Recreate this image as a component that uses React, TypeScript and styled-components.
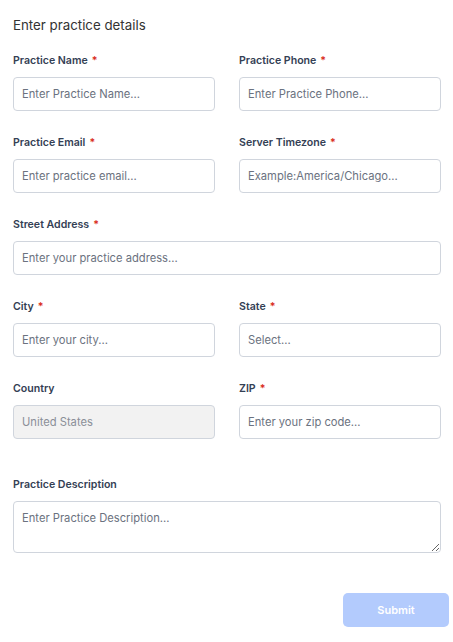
import React from "react";
import styled, { createGlobalStyle } from "styled-components";

const GlobalStyle = createGlobalStyle`
  html, body { margin: 0; padding: 0; background: #ffffff; }
  body { font-family: Inter, "Noto Sans", Arial, sans-serif; }
  * { box-sizing: border-box; }
`;

const Page = styled.div`
  padding: 17px 12px 0 13px;
  width: 453px;
`;

const Title = styled.h2`
  margin: 0 0 20px 0;
  font-size: 13.3px;
  line-height: 17px;
  font-weight: 400;
  color: #333333;
`;

const Grid = styled.div`
  display: grid;
  grid-template-columns: 202px 202px;
  column-gap: 24px;
  row-gap: 25px;
  width: 428px;
`;

const Field = styled.div<{ $full?: boolean; $extraTop?: number }>`
  display: flex;
  flex-direction: column;
  gap: 9px;
  grid-column: ${(p) => (p.$full ? "1 / -1" : "auto")};
  margin-top: ${(p) => p.$extraTop ?? 0}px;
`;

const Label = styled.label`
  font-size: 10.6px;
  line-height: 14px;
  font-weight: 600;
  color: #344054;
`;

const Req = styled.span`
  color: #d92d20;
  margin-left: 4px;
`;

const Input = styled.input<{ $disabled?: boolean }>`
  height: 34px;
  width: 100%;
  border: 1px solid #d0d5dd;
  border-radius: 4px;
  padding: 0 8px;
  font-family: Inter, "Noto Sans", Arial, sans-serif;
  font-size: 11.2px;
  color: #333;
  background: ${(p) => (p.$disabled ? "#f2f2f2" : "#ffffff")};
  outline: none;
  &::placeholder {
    color: ${(p) => (p.$disabled ? "#8a8f98" : "#6b7280")};
  }
`;

const TextArea = styled.textarea`
  height: 52px;
  width: 100%;
  border: 1px solid #d0d5dd;
  border-radius: 4px;
  padding: 8px 8px;
  font-family: Inter, "Noto Sans", Arial, sans-serif;
  font-size: 11.2px;
  line-height: 16px;
  resize: vertical;
  outline: none;
  display: block;
  &::placeholder {
    color: #6b7280;
  }
`;

const Footer = styled.div`
  display: flex;
  justify-content: flex-end;
  margin-top: 40px;
  width: 436px;
`;

const SubmitButton = styled.button`
  width: 106px;
  height: 34px;
  border: none;
  border-radius: 5px;
  background: #b3cbfd;
  color: #ffffff;
  font-family: Inter, "Noto Sans", Arial, sans-serif;
  font-size: 11px;
  font-weight: 600;
`;

type F = { label: string; placeholder: string; required?: boolean; full?: boolean; disabled?: boolean };

const fields: F[] = [
  { label: "Practice Name", placeholder: "Enter Practice Name...", required: true },
  { label: "Practice Phone", placeholder: "Enter Practice Phone...", required: true },
  { label: "Practice Email", placeholder: "Enter practice email...", required: true },
  { label: "Server Timezone", placeholder: "Example:America/Chicago...", required: true },
  { label: "Street Address", placeholder: "Enter your practice address...", required: true, full: true },
  { label: "City", placeholder: "Enter your city...", required: true },
  { label: "State", placeholder: "Select...", required: true },
  { label: "Country", placeholder: "United States", disabled: true },
  { label: "ZIP", placeholder: "Enter your zip code...", required: true },
];

export default function App() {
  return (
    <>
      <GlobalStyle />
      <Page>
        <Title>Enter practice details</Title>
        <Grid>
          {fields.map((f) => (
            <Field key={f.label} $full={f.full}>
              <Label>
                {f.label}
                {f.required && <Req>*</Req>}
              </Label>
              <Input placeholder={f.placeholder} $disabled={f.disabled} disabled={f.disabled} />
            </Field>
          ))}
          <Field $full $extraTop={14}>
            <Label>Practice Description</Label>
            <TextArea placeholder="Enter Practice Description..." />
          </Field>
        </Grid>
        <Footer>
          <SubmitButton>Submit</SubmitButton>
        </Footer>
      </Page>
    </>
  );
}
